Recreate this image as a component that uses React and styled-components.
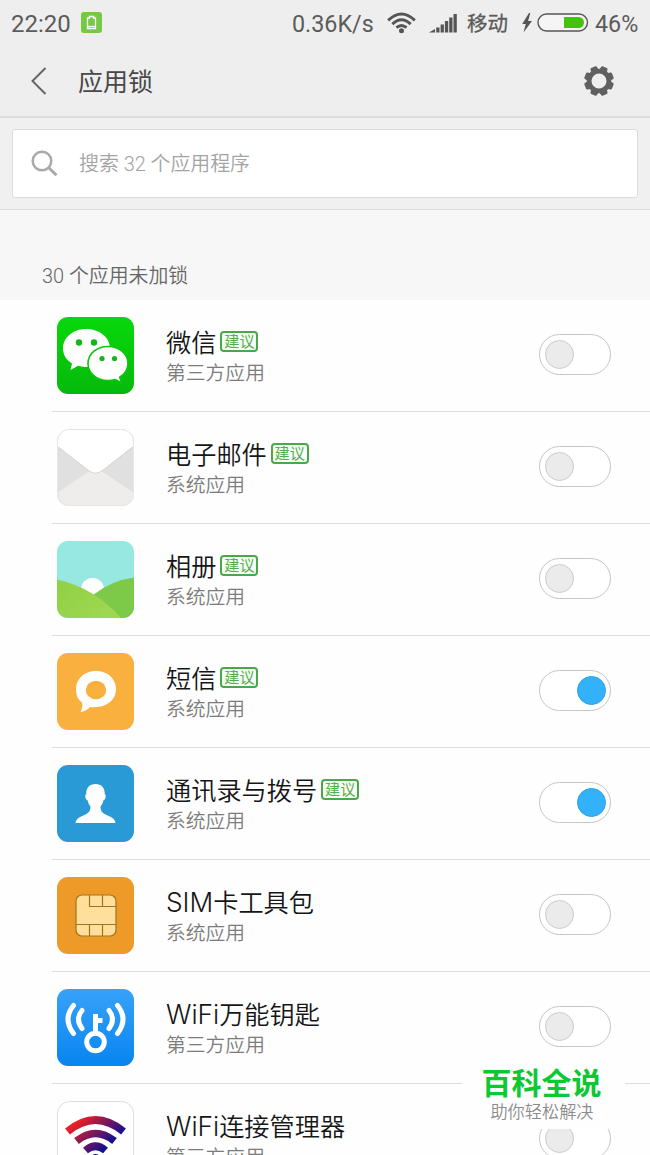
import styled, { createGlobalStyle } from "styled-components";

const GlobalStyle = createGlobalStyle`
    * {
        box-sizing: border-box;
    }
    body {
        margin: 0;
        background: #fefefe;
        font-family: Roboto, "Noto Sans CJK SC", sans-serif;
    }
    svg {
        display: block;
        flex-shrink: 0;
    }
`;

const Screen = styled.div`
    position: relative;
    width: 650px;
    height: 1155px;
    overflow: hidden;
    display: flex;
    flex-direction: column;
    background: #fefefe;
`;

const StatusBar = styled.div`
    display: flex;
    align-items: center;
    flex-shrink: 0;
    height: 46px;
    padding: 0 11px;
    background: #eeeeee;
    color: #5b5b5b;
    font-size: 23px;
    line-height: 48px;
`;

const Clock = styled.span`
    width: 60px;
    margin: 2px 10px 0 0;
    font-size: 24px;
    white-space: nowrap;
`;

const StatusRight = styled.div`
    display: flex;
    align-items: center;
    gap: 13px;
    margin-left: auto;
`;

const Speed = styled.span`
    width: 82px;
    margin-top: 2px;
    font-size: 23.3px;
    white-space: nowrap;
`;

const Carrier = styled.span`
    width: 41px;
    margin: 2px 0 0 -3px;
    font-size: 20.5px;
    white-space: nowrap;
    -webkit-text-stroke: 0.3px #5b5b5b;
`;

const Percent = styled.span`
    width: 44px;
    margin: 2px 0 0 -7px;
    font-size: 23.3px;
    white-space: nowrap;
`;

const Header = styled.div`
    display: flex;
    align-items: center;
    flex-shrink: 0;
    height: 72px;
    padding: 0 35px 0 30px;
    background: #eeeeee;
    border-bottom: 2px solid #dcdcdc;
`;

const Title = styled.h1`
    flex: 1;
    margin: 4px 0 0 30px;
    color: #484848;
    font-size: 25px;
    font-weight: 400;
    line-height: 70px;
`;

const SearchArea = styled.div`
    flex-shrink: 0;
    height: 92px;
    padding: 11px 12px 12px;
    background: #f0f0f0;
    border-bottom: 1px solid #dadada;
`;

const SearchBox = styled.div`
    display: flex;
    align-items: center;
    height: 69px;
    padding-left: 18px;
    border: 1px solid #dcdcdc;
    border-radius: 3px;
    background: #fff;
    color: #a3a3a3;
    font-size: 19.9px;
    font-weight: 350;
    line-height: 66px;
`;

const Placeholder = styled.span`
    margin: 3px 0 0 20px;
    white-space: nowrap;
`;

const SectionTitle = styled.div`
    flex-shrink: 0;
    height: 90px;
    padding: 52px 0 0 42px;
    background: #f7f7f7;
    color: #666;
    font-size: 19.9px;
    font-weight: 350;
    line-height: 30px;
`;

const Row = styled.div`
    display: flex;
    align-items: center;
    flex-shrink: 0;
    height: 112px;
    margin-left: 52px;
    padding: 0 39px 0 5px;
    border-bottom: 1px solid #dcdcdc;
`;

const Info = styled.div`
    flex: 1;
    margin: 4px 0 0 32px;
`;

const NameLine = styled.div`
    display: flex;
    align-items: center;
    height: 32px;
`;

const Name = styled.span`
    color: #161616;
    font-family: Inter, "Noto Sans CJK SC", sans-serif;
    font-size: 25.2px;
    font-weight: 350;
    line-height: 32px;
    white-space: nowrap;
`;

const Latin = styled.span`
    font-size: 26.3px;
    font-weight: 300;
    line-height: 1;
`;

const Badge = styled.span`
    width: 38px;
    height: 21px;
    margin: -3px 0 0 4px;
    border: 2px solid #4aa84a;
    border-radius: 4px;
    background: #f7fff5;
    color: #55ad52;
    font-size: 15.2px;
    line-height: 18px;
    text-align: center;
    white-space: nowrap;
`;

const Kind = styled.div`
    margin-top: 1px;
    color: #7c7c7c;
    font-size: 19.8px;
    font-weight: 350;
    line-height: 28px;
`;

const Switch = styled.div`
    display: flex;
    align-items: center;
    justify-content: ${({ $on }) => ($on ? "flex-end" : "flex-start")};
    width: 72px;
    height: 41px;
    margin-top: -2px;
    padding: 0 4px 0 5px;
    border: 1px solid #c6c6c6;
    border-radius: 21px;
    background: #fff;

    &::before {
        content: "";
        box-sizing: border-box;
        width: 29px;
        height: 29px;
        border: 1px solid ${({ $on }) => ($on ? "#2ba2e4" : "#cbcbcb")};
        border-radius: 50%;
        background: ${({ $on }) => ($on ? "#33b1fa" : "#ebebeb")};
    }
`;

const Watermark = styled.div`
    position: absolute;
    left: 462px;
    top: 1064px;
    width: 163px;
    height: 65px;
    background: #fefefe;
    text-align: center;
    white-space: nowrap;
`;

const Brand = styled.div`
    padding-right: 4px;
    color: #0cc833;
    font-size: 30px;
    font-weight: 700;
    line-height: 39px;
`;

const Slogan = styled.div`
    padding-right: 3px;
    color: #8c8c8c;
    font-size: 17.2px;
    font-weight: 350;
    line-height: 18px;
`;

const SaverIcon = () => (
    <svg width="21" height="22" viewBox="0 0 21 22">
        <rect width="21" height="21" rx="3" fill="#76c943" />
        <path
            d="M6.500 6h2V4.500h4V6h2v10.500h-8z"
            fill="none"
            stroke="#fff"
            strokeWidth="1.300"
        />
        <path d="M6.500 14.500h8" stroke="#fff" strokeWidth="1.300" />
    </svg>
);

const WifiIcon = () => (
    <svg width="29" height="22" viewBox="0 0 30 22">
        <g fill="none" stroke="#555" strokeWidth="3">
            <path d="M1.2 8.3Q15-5 28.8 8.3" />
            <path d="M5.5 12.1Q15 3.3 24.5 12.1" />
            <path d="M9.8 15.8Q15 11.2 20.2 15.8" />
        </g>
        <circle cx="15" cy="19" r="2.6" fill="#555" />
    </svg>
);

const SignalIcon = () => (
    <svg width="28" height="20" viewBox="0 0 28 20">
        <path
            d="M0 19.500L6 16v3.500zM7.200 14.500h3.300v5H7.200zM11.600 11.500h3.300v8h-3.300zM15.900 8h3.300v11.500h-3.300zM20.200 4.500h3.300v15h-3.300zM24.500 1h3.300v18.500h-3.300z"
            fill="#555"
        />
    </svg>
);

const BatteryIcon = () => (
    <svg width="68" height="24" viewBox="0 0 68 24">
        <path
            d="M8 2L1.200 13h3.600L2.500 21.500 11 10H7.100L9.300 2z"
            fill="#555"
        />
        <rect
            x="17"
            y="3"
            width="49.500"
            height="17"
            rx="8.500"
            fill="#f5f5f5"
            stroke="#555"
            strokeWidth="1.400"
        />
        <path d="M43 6h14.500a5.500 5.500 0 0 1 0 11H43z" fill="#45c20b" />
    </svg>
);

const BackIcon = () => (
    <svg width="18" height="30" viewBox="0 0 18 30">
        <path
            d="M15.500 2L2.500 15l13 13"
            fill="none"
            stroke="#656565"
            strokeWidth="2"
        />
    </svg>
);

const GearIcon = () => (
    <svg width="32" height="30" viewBox="-16 -15.200 32 30.400">
        <g fill="#606060">
            {[22.5, 67.5, 112.5, 157.5, 202.5, 247.5, 292.5, 337.5].map(
                (deg) => (
                    <path
                        key={deg}
                        d="M-4.500-9l1-5q.2-1.100 1.200-1.100h4.600q1 0 1.200 1.100l1 5z"
                        transform={`rotate(${deg})`}
                    />
                )
            )}
        </g>
        <circle r="10" fill="none" stroke="#606060" strokeWidth="4.800" />
    </svg>
);

const SearchIcon = () => (
    <svg width="28" height="28" viewBox="0 0 28 28">
        <g fill="none" stroke="#a9a9a9" strokeWidth="2.500">
            <circle cx="11" cy="11" r="9.300" />
            <path d="M17.500 17.500l8 7.800" strokeWidth="3" />
        </g>
    </svg>
);

const AppIcon = ({ children }) => (
    <svg width="77" height="77" viewBox="0 0 77 77">
        {children}
    </svg>
);

const WechatIcon = () => (
    <AppIcon>
        <defs>
            <linearGradient id="wechat" x2="0" y2="1">
                <stop offset="0" stopColor="#08d80b" />
                <stop offset="1" stopColor="#05b90c" />
            </linearGradient>
        </defs>
        <rect width="77" height="77" rx="11" fill="url(#wechat)" />
        <path
            d="M29 12C16 12 6 20.500 6 31.500c0 6.500 3.500 11.500 9 15L13.500 53l7.500-4.200c3 .9 6 1.200 9.500 1.200C43 50 53 42 53 31S42 12 29 12z"
            fill="#fff"
        />
        <path
            d="M51 29.500c-11.500 0-20 7.500-20 17s8.500 17 20 17c2.600 0 5-.3 7.200-1l6.300 3.200-1.800-5.500c5.200-3.300 8.300-8 8.300-13.700 0-9.500-8.500-17-20-17z"
            fill="#fff"
            stroke="#08c70c"
            strokeWidth="1.600"
        />
        <g fill="#13b51a">
            <circle cx="22" cy="25.500" r="3.200" />
            <circle cx="37" cy="25.500" r="3.200" />
            <circle cx="45" cy="41.500" r="2.600" />
            <circle cx="57.500" cy="41.500" r="2.600" />
        </g>
    </AppIcon>
);

const MailIcon = () => (
    <AppIcon>
        <clipPath id="mail">
            <rect width="77" height="77" rx="12" />
        </clipPath>
        <g clipPath="url(#mail)">
            <rect width="77" height="77" fill="#e0e0e0" />
            <path d="M0 64L38.500 38 77 64v13H0z" fill="#eeedec" />
            <path
                d="M0 17l31.500 24.500q7 5.500 14 0L77 17V0H0z"
                fill="#fff"
                stroke="#d2d2d2"
            />
        </g>
        <rect
            x=".5"
            y=".5"
            width="76"
            height="76"
            rx="12"
            fill="none"
            stroke="#e6e6e6"
        />
    </AppIcon>
);

const GalleryIcon = () => (
    <AppIcon>
        <defs>
            <linearGradient id="hill" x2="1" y2=".6">
                <stop offset="0" stopColor="#8fd044" />
                <stop offset="1" stopColor="#9fd752" />
            </linearGradient>
        </defs>
        <clipPath id="gallery">
            <rect width="77" height="77" rx="11" />
        </clipPath>
        <g clipPath="url(#gallery)">
            <rect width="77" height="77" fill="#98e8e2" />
            <circle cx="35.500" cy="48.500" r="11.500" fill="#fff" />
            <path d="M36 54Q54 39.500 77 36.500V77H36z" fill="#7cca48" />
            <path d="M0 38.500Q38 47 64 77H0z" fill="url(#hill)" />
        </g>
    </AppIcon>
);

const MessageIcon = () => (
    <AppIcon>
        <rect width="77" height="77" rx="11" fill="#fab03f" />
        <path
            d="M39 18c-12 0-20 8-20 18 0 7 2.500 11 6 13.500 1 3-.2 6.500-1.300 9.500 4.300-.8 7.500-3 9.500-5 15 1.500 25.800-6 25.800-18 0-10-8-18-20-18z"
            fill="#fff"
        />
        <ellipse cx="39" cy="37" rx="10.200" ry="9.200" fill="#fab03f" />
    </AppIcon>
);

const ContactsIcon = () => (
    <AppIcon>
        <rect width="77" height="77" rx="11" fill="#2a9ad6" />
        <path
            d="M38.500 19c-6 0-9.500 4-9.300 10.200-1.300.4-1.200 2.800-.4 4.300.4 1 1 1.500 1.700 1.700.7 3 1.800 4.800 3 6.300 0 4.500-1.700 6.500-5.500 8.200-4.500 2-8.800 3.300-9.500 8.300h40c-.7-5-5-6.300-9.500-8.300-3.800-1.700-5.500-3.700-5.500-8.200 1.200-1.500 2.300-3.300 3-6.300.7-.2 1.300-.7 1.700-1.700.8-1.500.9-3.900-.4-4.300C48 23 44.500 19 38.500 19z"
            fill="#fff"
        />
    </AppIcon>
);

const SimIcon = () => (
    <AppIcon>
        <rect width="77" height="77" rx="11" fill="#ee9a29" />
        <g fill="#ffdf9c" stroke="#a0741f" strokeWidth="1.200">
            <rect x="19" y="18" width="40" height="41" rx="6" />
            <path
                d="M32.500 18v11.500H59M45.500 18v11.500M19 47.500h40M32.500 47.500V59M45.500 47.500V59"
                fill="none"
            />
        </g>
    </AppIcon>
);

const WifiKeyIcon = () => (
    <AppIcon>
        <defs>
            <linearGradient id="wifikey" x2="0" y2="1">
                <stop offset="0" stopColor="#37a2fa" />
                <stop offset="1" stopColor="#0885ef" />
            </linearGradient>
        </defs>
        <rect width="77" height="77" rx="11" fill="url(#wifikey)" />
        <g fill="none" stroke="#fff" strokeWidth="5" strokeLinecap="round">
            <path d="M16.500 16.500Q5.500 30 16.500 44.500" />
            <path d="M25 21.500Q18 30 25 39.500" />
            <path d="M60.500 16.500Q71.500 30 60.500 44.500" />
            <path d="M52 21.500Q59 30 52 39.500" />
            <circle cx="38.500" cy="53" r="8.800" />
            <path d="M38.500 44V25M38.500 31.500h7" strokeLinecap="butt" />
        </g>
    </AppIcon>
);

const WifiManagerIcon = () => (
    <AppIcon>
        <defs>
            <linearGradient
                id="manager"
                gradientUnits="userSpaceOnUse"
                x1="24"
                y1="18"
                x2="49"
                y2="46"
            >
                <stop offset="0" stopColor="#e91f26" />
                <stop offset="1" stopColor="#14108d" />
            </linearGradient>
        </defs>
        <rect
            x=".5"
            y=".5"
            width="76"
            height="76"
            rx="12"
            fill="#fff"
            stroke="#dedede"
        />
        <g fill="none" stroke="url(#manager)" strokeWidth="7.500">
            <path d="M10.500 30.500Q38.500 7.500 66.500 30.500" />
            <path d="M19.500 40Q38.500 25 57.500 40" />
            <path d="M28.500 49.500Q38.500 41 48.500 49.500" />
        </g>
        <circle cx="38.500" cy="57" r="4" fill="#14108d" />
    </AppIcon>
);

const SYSTEM = "系统应用";
const THIRD_PARTY = "第三方应用";

const apps = [
    { name: "微信", kind: THIRD_PARTY, icon: WechatIcon, suggested: true },
    { name: "电子邮件", kind: SYSTEM, icon: MailIcon, suggested: true },
    { name: "相册", kind: SYSTEM, icon: GalleryIcon, suggested: true },
    {
        name: "短信",
        kind: SYSTEM,
        icon: MessageIcon,
        suggested: true,
        locked: true,
    },
    {
        name: "通讯录与拨号",
        kind: SYSTEM,
        icon: ContactsIcon,
        suggested: true,
        locked: true,
    },
    { prefix: "SIM", name: "卡工具包", kind: SYSTEM, icon: SimIcon },
    {
        prefix: "WiFi",
        name: "万能钥匙",
        kind: THIRD_PARTY,
        icon: WifiKeyIcon,
    },
    {
        prefix: "WiFi",
        name: "连接管理器",
        kind: THIRD_PARTY,
        icon: WifiManagerIcon,
    },
];

const AppRow = ({ app }) => {
    const Icon = app.icon;
    return (
        <Row>
            <Icon />
            <Info>
                <NameLine>
                    <Name>
                        {app.prefix && <Latin>{app.prefix}</Latin>}
                        {app.name}
                    </Name>
                    {app.suggested && <Badge>建议</Badge>}
                </NameLine>
                <Kind>{app.kind}</Kind>
            </Info>
            <Switch $on={app.locked} />
        </Row>
    );
};

const App = () => (
    <>
        <GlobalStyle />
        <Screen>
            <StatusBar>
                <Clock>22:20</Clock>
                <SaverIcon />
                <StatusRight>
                    <Speed>0.36K/s</Speed>
                    <WifiIcon />
                    <SignalIcon />
                    <Carrier>移动</Carrier>
                    <BatteryIcon />
                    <Percent>46%</Percent>
                </StatusRight>
            </StatusBar>
            <Header>
                <BackIcon />
                <Title>应用锁</Title>
                <GearIcon />
            </Header>
            <SearchArea>
                <SearchBox>
                    <SearchIcon />
                    <Placeholder>搜索 32 个应用程序</Placeholder>
                </SearchBox>
            </SearchArea>
            <SectionTitle>30 个应用未加锁</SectionTitle>
            {apps.map((app) => (
                <AppRow key={app.name} app={app} />
            ))}
            <Watermark>
                <Brand>百科全说</Brand>
                <Slogan>助你轻松解决</Slogan>
            </Watermark>
        </Screen>
    </>
);

export default App;
